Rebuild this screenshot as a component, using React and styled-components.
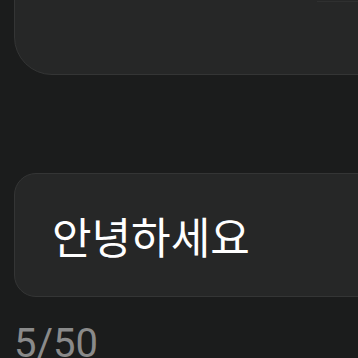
import styled, { createGlobalStyle } from "styled-components";

const GlobalStyle = createGlobalStyle`
  html, body {
    margin: 0;
    padding: 0;
    background: #1b1c1c;
    overflow: hidden;
  }
  body {
    font-family: Roboto, "Noto Sans CJK KR", sans-serif;
  }
`;

const Page = styled.div`
  height: 358px;
  padding-left: 14px;
  display: flex;
  flex-direction: column;
`;

const Card = styled.div`
  box-sizing: border-box;
  margin-right: -60px;
  background: #262727;
  border: 1.5px solid #343535;
  border-radius: ${(p) => p.$radius}px;
  flex-shrink: 0;
`;

const TopCard = styled(Card)`
  height: 120px;
  margin-top: -45px;
  display: flex;
  justify-content: flex-end;
`;

const TopEdge = styled.div`
  width: 100px;
  height: 45px;
  border-bottom: 1px solid #2f3030;
`;

const InputCard = styled(Card)`
  height: 124px;
  margin-top: 98px;
  display: flex;
  align-items: center;
  padding-left: 37px;
`;

const Value = styled.span`
  font-family: "Noto Sans CJK KR", sans-serif;
  font-size: 43px;
  line-height: 1;
  color: #ffffff;
`;

const Counter = styled.div`
  margin-top: 23px;
  font-family: Roboto, sans-serif;
  font-size: 40px;
  color: #8a8a8a;
  line-height: 1.2;
`;

export default function App() {
  return (
    <>
      <GlobalStyle />
      <Page>
        <TopCard $radius={38}>
          <TopEdge />
        </TopCard>
        <InputCard $radius={22}>
          <Value>안녕하세요</Value>
        </InputCard>
        <Counter>5/50</Counter>
      </Page>
    </>
  );
}
